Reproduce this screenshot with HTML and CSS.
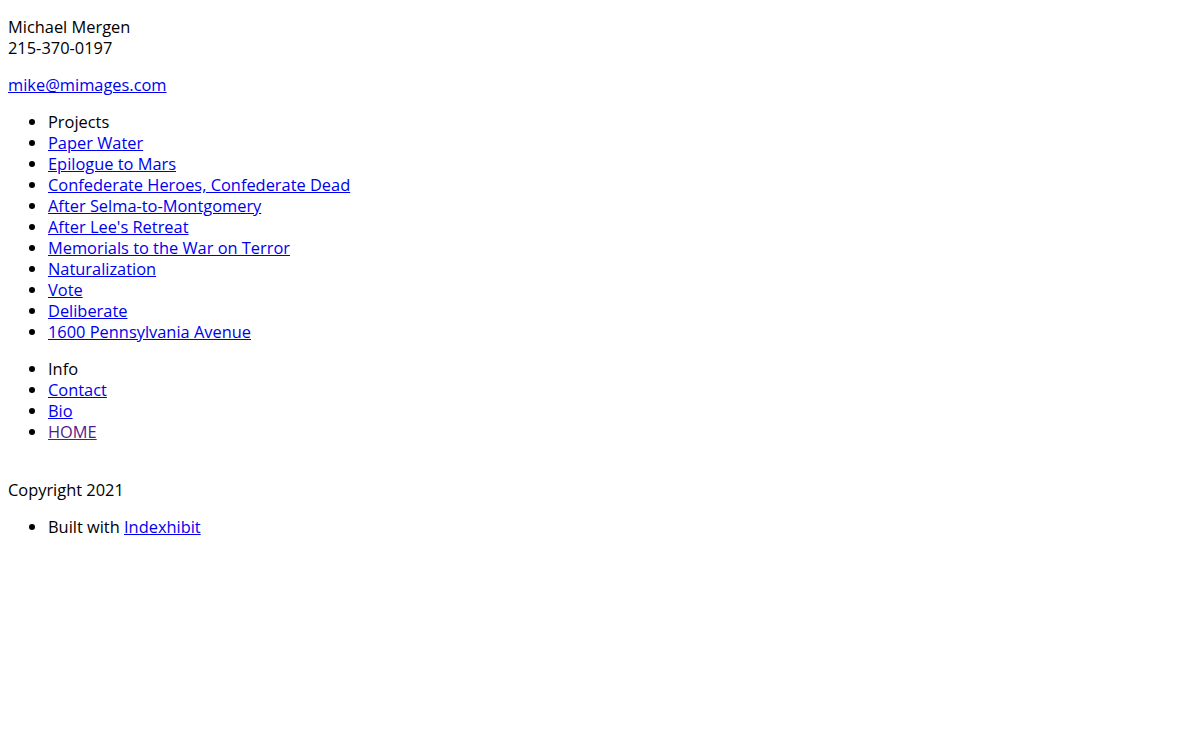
FILE: index.html
```html
<!DOCTYPE html>
<html>
<head>
<meta charset="utf-8">
<link rel="stylesheet" href="styles.css">
</head>
<body>
<div class="menu">
<p>Michael Mergen<br>215-370-0197</p>
<p><a href="#">mike@mimages.com</a></p>
<ul>
<li>Projects</li>
<li><a href="#">Paper Water</a></li>
<li><a href="#">Epilogue to Mars</a></li>
<li><a href="#">Confederate Heroes, Confederate Dead</a></li>
<li><a href="#">After Selma-to-Montgomery</a></li>
<li><a href="#">After Lee's Retreat</a></li>
<li><a href="#">Memorials to the War on Terror</a></li>
<li><a href="#">Naturalization</a></li>
<li><a href="#">Vote</a></li>
<li><a href="#">Deliberate</a></li>
<li><a href="#">1600 Pennsylvania Avenue</a></li>
</ul>
<ul>
<li>Info</li>
<li><a href="#">Contact</a></li>
<li><a href="#">Bio</a></li>
<li><a href="#" class="visited">HOME</a></li>
</ul>
</div>
<div class="footer">
<p>Copyright 2021</p>
<ul>
<li>Built with <a href="#">Indexhibit</a></li>
</ul>
</div>
</body>
</html>
```
FILE: styles.css
```css
html { margin: 0; padding: 0; }
body {
  margin: 0 8px 8px;
  padding: 0;
  font-family: "Open Sans", "Noto Sans CJK SC", sans-serif;
  font-size: 16.4px;
  line-height: 21px;
  color: #000;
  background: #fff;
}
a { color: #0000ee; }
a.visited { color: #551a8b; }
p { margin: 16px 0; }
ul { margin: 16px 0; padding-left: 40px; }
.footer { padding-top: 5px; }
```
